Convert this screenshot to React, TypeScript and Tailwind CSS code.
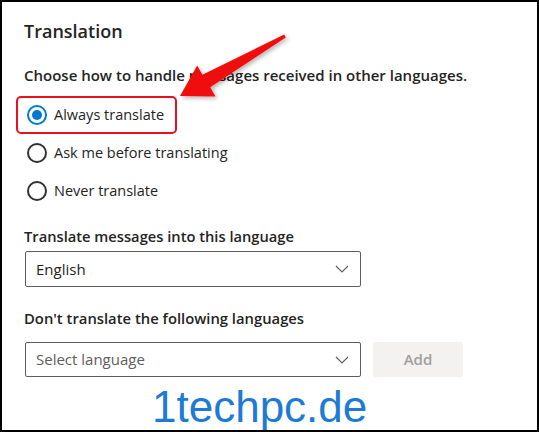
import React from 'react';

const font = { fontFamily: '"Open Sans", "Noto Sans", sans-serif' };

function Radio({ checked }: { checked?: boolean }) {
  return checked ? (
    <span className="flex h-[20px] w-[20px] items-center justify-center rounded-full border-2 border-[#0078d4]">
      <span className="h-[10px] w-[10px] rounded-full bg-[#0078d4]" />
    </span>
  ) : (
    <span className="h-[20px] w-[20px] rounded-full border-2 border-[#323130]" />
  );
}

function Chevron() {
  return (
    <svg width="14" height="8" viewBox="0 0 14 8" fill="none">
      <path d="M1 1l6 6 6-6" stroke="#605e5c" strokeWidth="1.1" />
    </svg>
  );
}

export default function App() {
  const options = [
    { label: 'Always translate', checked: true },
    { label: 'Ask me before translating', checked: false },
    { label: 'Never translate', checked: false },
  ];

  return (
    <div
      className="relative h-[432px] w-[539px] overflow-hidden border-2 border-black bg-white pl-[22px] pt-[17px] text-[#252423]"
      style={font}
    >
      {/* Header */}
      <h1 className="text-[18px] font-semibold leading-[24px]">Translation</h1>

      <p className="mt-[22px] text-[15px] font-semibold leading-[20px]">
        Choose how to handle messages received in other languages.
      </p>

      {/* Options */}
      <div className="mt-[11px] flex flex-col">
        {options.map((o) => (
          <div key={o.label} className="relative flex h-[38px] items-center gap-[7px] pl-[3px]">
            <Radio checked={o.checked} />
            <span className="text-[14.5px] leading-[20px]">{o.label}</span>
            {o.checked && (
              <span className="absolute left-[-8px] top-0 h-[38px] w-[161px] rounded-[5px] border-2 border-[#e8111c]" />
            )}
          </div>
        ))}
      </div>

      <p className="mt-[16px] text-[14.7px] font-semibold leading-[20px]">
        Translate messages into this language
      </p>
      <div className="ml-px mt-[5px] flex h-[36px] w-[336px] items-center justify-between rounded-[2px] border border-[#605e5c] pl-[10px] pr-[11px]">
        <span className="text-[15px]">English</span>
        <Chevron />
      </div>

      <p className="mt-[21px] text-[14.8px] font-semibold leading-[20px]">
        Don't translate the following languages
      </p>
      <div className="ml-px mt-[14px] flex items-center gap-[12px]">
        <div className="flex h-[35px] w-[336px] items-center justify-between rounded-[2px] border border-[#605e5c] pl-[10px] pr-[11px]">
          <span className="text-[15px] text-[#605e5c]">Select language</span>
          <Chevron />
        </div>
        <button className="h-[35px] w-[90px] rounded-[2px] bg-[#f3f2f1] text-[15px] font-semibold text-[#a19f9d]">
          Add
        </button>
      </div>

      {/* Watermark */}
      <div
        className="absolute left-[150px] top-[380px] text-[44px] leading-[50px] text-[#1d7ad6]"
        style={{ fontFamily: '"Liberation Sans", Arial, sans-serif' }}
      >
        1techpc.de
      </div>

      {/* Arrow annotation */}
      <svg className="absolute left-0 top-0" width="539" height="432" viewBox="0 0 539 432">
        <defs>
          <filter id="sh" x="-20%" y="-20%" width="140%" height="140%">
            <feDropShadow dx="2" dy="2" stdDeviation="2" floodColor="#000" floodOpacity="0.3" />
          </filter>
        </defs>
        <polygon
          filter="url(#sh)"
          fill="#f01010"
          points="283.8,35.4 208.2,85.3 213.5,94.6 178,94 195.2,63.5 200.4,72.8 282.2,32.6"
        />
      </svg>
    </div>
  );
}
